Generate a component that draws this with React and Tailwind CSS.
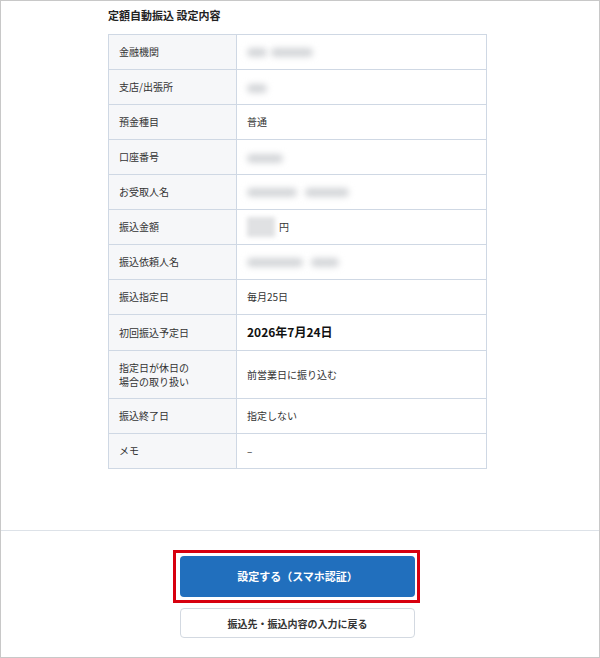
import React from 'react'

const Blur = ({ w, className = '' }) => (
  <span
    className={`inline-block h-[9px] rounded-full bg-[#d4d6d9] blur-[3px] align-middle ${className}`}
    style={{ width: w }}
  />
)

const rows = [
  { label: '金融機関', value: <span className="flex gap-[4px]"><Blur w={20} /><Blur w={42} className="bg-[#c9cbce]" /></span> },
  { label: '支店/出張所', value: <Blur w={20} /> },
  { label: '預金種目', value: '普通' },
  { label: '口座番号', value: <Blur w={36} /> },
  { label: 'お受取人名', value: <span className="flex gap-[8px]"><Blur w={50} /><Blur w={44} /></span> },
  {
    label: '振込金額',
    value: (
      <span className="flex items-center gap-[4px]">
        <span className="inline-block h-[20px] w-[28px] bg-[#e0e1e3] blur-[2px]" />
        <span>円</span>
      </span>
    ),
  },
  { label: '振込依頼人名', value: <span className="flex gap-[8px]"><Blur w={56} /><Blur w={28} /></span> },
  { label: '振込指定日', value: '毎月25日' },
  { label: '初回振込予定日', value: <span className="text-[12px] font-bold text-[#111]">2026年7月24日</span>, h: 'h-[36px]' },
  { label: <>指定日が休日の<br />場合の取り扱い</>, value: '前営業日に振り込む', h: 'h-[48px]' },
  { label: '振込終了日', value: '指定しない' },
  { label: 'メモ', value: '–' },
]

const App = () => {
  return (
    <div
      className="w-[600px] h-[658px] border border-[#c8c8c8] bg-white flex flex-col text-[#333]"
      style={{ fontFamily: '"Noto Sans CJK JP", "Noto Sans", sans-serif' }}
    >
      <div className="h-[530px] border-b border-[#dde2e8] pl-[107px] pt-[6px]">
        <h2 className="text-[11px] leading-[16px] font-bold text-[#222] mb-[11px]">定額自動振込 設定内容</h2>
        <table className="w-[379px] border-collapse text-[10px]">
          <tbody>
            {rows.map((r, i) => (
              <tr key={i} className={r.h || 'h-[35px]'}>
                <th className="w-[128px] border border-[#cfd8e4] bg-[#f6f7f9] pl-[10px] text-left font-normal leading-[14px]">
                  {r.label}
                </th>
                <td className="border border-[#cfd8e4] pl-[10px] leading-[14px]">{r.value}</td>
              </tr>
            ))}
          </tbody>
        </table>
      </div>
      <div className="flex flex-col items-center pt-[25px] pr-[5px]">
        <div className="relative">
          <div className="absolute -left-[7px] -right-[5px] -top-[6px] -bottom-[6px] border-[3px] border-[#d7000f]" />
          <button className="w-[235px] h-[41px] rounded-[4px] bg-[#216fbd] text-white text-[11px] font-bold">
            設定する（スマホ認証）
          </button>
        </div>
        <button className="mt-[11px] w-[235px] h-[30px] rounded-[4px] border border-[#d3d9e1] bg-white text-[#333] text-[10px] font-bold">
          振込先・振込内容の入力に戻る
        </button>
      </div>
    </div>
  )
}

export default App
